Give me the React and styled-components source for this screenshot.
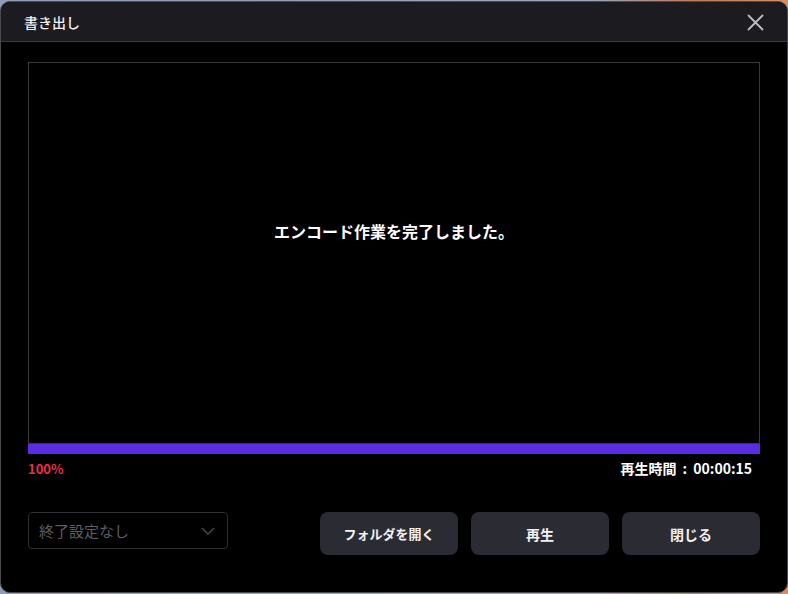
import styled, { createGlobalStyle } from "styled-components";

const Global = createGlobalStyle`
  html, body {
    margin: 0;
    padding: 0;
    height: 100%;
  }
  body {
    background: linear-gradient(90deg, #8d9cb8 0%, #9aa6bd 75%, #c07a5a 88%, #d48f6a 100%);
    font-family: "Noto Sans CJK JP", "Noto Sans", sans-serif;
    overflow: hidden;
  }
`;

const Window = styled.div`
  box-sizing: border-box;
  margin-top: 1px;
  width: 788px;
  height: 592px;
  background: #000;
  border: 1px solid #4a4a4e;
  border-radius: 10px;
  overflow: hidden;
  display: flex;
  flex-direction: column;
`;

const Header = styled.div`
  height: 39px;
  flex: none;
  background: #1b1b20;
  border-bottom: 1px solid #3b3b40;
  display: flex;
  align-items: center;
  justify-content: space-between;
  padding: 0 23px 0 23px;
`;

const Title = styled.h1`
  margin: 0;
  font-size: 14px;
  font-weight: 500;
  color: #f4f4f6;
`;

const Close = styled.button`
  background: none;
  border: none;
  padding: 0;
  width: 18px;
  height: 18px;
  display: flex;
  align-items: center;
  justify-content: center;
  margin-top: 1px;
`;

const Body = styled.div`
  flex: 1;
  display: flex;
  flex-direction: column;
  padding: 20px 27px 0 27px;
`;

const Preview = styled.div`
  height: 380px;
  border: 1px solid #3a3a3e;
  display: flex;
  align-items: center;
  justify-content: center;
`;

const Message = styled.p`
  margin: 0 0 44px;
  color: #fff;
  font-size: 16px;
  font-weight: 700;
`;

const Progress = styled.div`
  height: 10px;
  background: #5a2de3;
`;

const StatusRow = styled.div`
  display: flex;
  justify-content: space-between;
  align-items: center;
  margin-top: 4px;
  padding-right: 8px;
  font-size: 14px;
  font-weight: 700;
`;

const Percent = styled.span`
  color: #ea2f48;
  font-size: 13px;
`;

const Duration = styled.span`
  color: #fff;
  word-spacing: 3px;
`;

const Footer = styled.div`
  display: flex;
  align-items: flex-start;
  margin-top: 34px;
`;

const Select = styled.div`
  box-sizing: border-box;
  width: 200px;
  height: 37px;
  border: 1px solid #2e2e33;
  border-radius: 4px;
  display: flex;
  align-items: center;
  justify-content: space-between;
  padding: 0 12px 0 10px;
  color: #5e5e63;
  font-size: 15px;
`;

const Buttons = styled.div`
  margin-left: auto;
  display: flex;
  gap: 13px;
`;

const Button = styled.button`
  width: 138px;
  height: 43px;
  border: none;
  border-radius: 8px;
  background: #2b2c33;
  color: #f2f2f4;
  font-family: inherit;
  font-size: ${(p) => (p.$compact ? "13px" : "14px")};
  font-weight: 700;
`;

export default function App() {
  return (
    <>
      <Global />
      <Window>
        <Header>
          <Title>書き出し</Title>
          <Close aria-label="close">
            <svg width="17" height="17" viewBox="0 0 17 17">
              <path d="M1.5 1.5 L15.5 15.5 M15.5 1.5 L1.5 15.5" stroke="#bdbdc0" strokeWidth="1.8" strokeLinecap="round" />
            </svg>
          </Close>
        </Header>
        <Body>
          <Preview>
            <Message>エンコード作業を完了しました。</Message>
          </Preview>
          <Progress />
          <StatusRow>
            <Percent>100%</Percent>
            <Duration>再生時間 : 00:00:15</Duration>
          </StatusRow>
          <Footer>
            <Select>
              <span>終了設定なし</span>
              <svg width="14" height="8" viewBox="0 0 14 8">
                <path d="M1 1 L7 7 L13 1" fill="none" stroke="#4a4a50" strokeWidth="1.4" />
              </svg>
            </Select>
            <Buttons>
              <Button $compact>フォルダを開く</Button>
              <Button>再生</Button>
              <Button>閉じる</Button>
            </Buttons>
          </Footer>
        </Body>
      </Window>
    </>
  );
}
